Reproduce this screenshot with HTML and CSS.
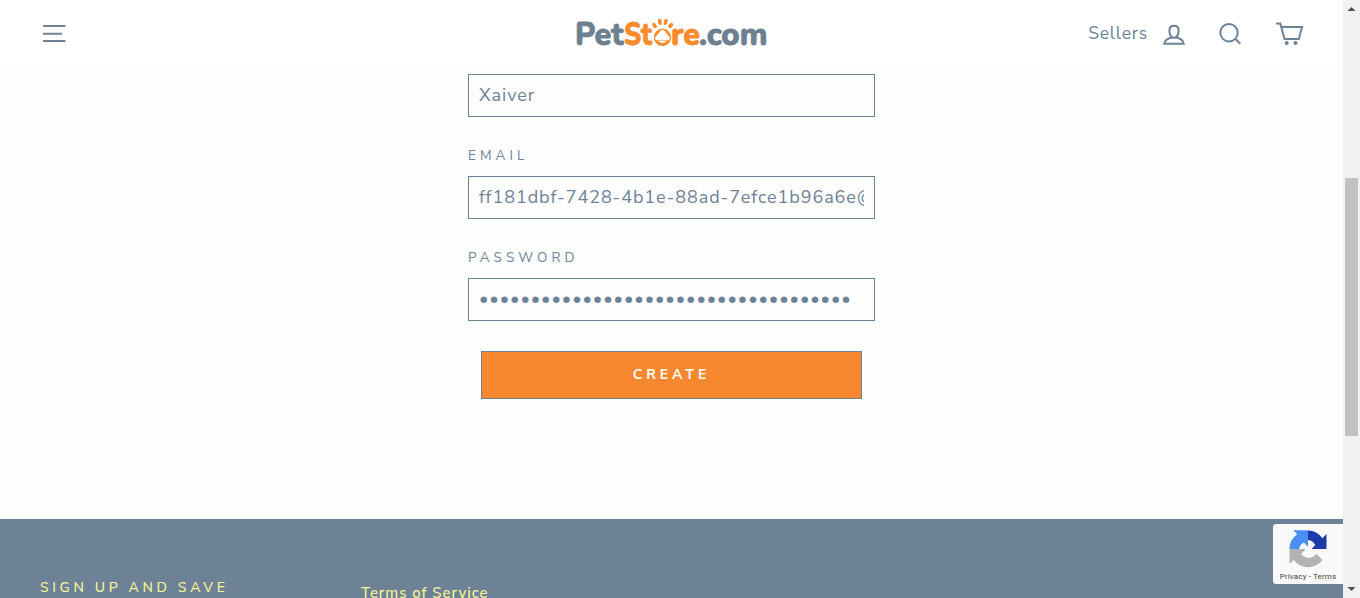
FILE: index.html
```html
<!DOCTYPE html>
<html lang="en">
<head>
<meta charset="utf-8">
<title>Create account</title>
<link rel="stylesheet" href="styles.css">
</head>
<body>
<div class="window">
  <div class="page">
    <header class="header">
      <svg class="menu" width="24" height="20" viewBox="0 0 24 20"><path d="M0 2h22.500M0 9.700h19M0 17h22.500"/></svg>
      <svg class="logo" width="196" height="42" viewBox="0 0 196 42">
        <g class="logo-text">
          <text x="-1" y="31" textLength="48.500" lengthAdjust="spacingAndGlyphs" class="slate">Pet</text>
          <text x="48" y="31" textLength="28" lengthAdjust="spacingAndGlyphs" class="orange">St</text>
          <text x="95" y="31" textLength="29" lengthAdjust="spacingAndGlyphs" class="orange">re</text>
          <text x="123" y="31" textLength="68.500" lengthAdjust="spacingAndGlyphs" class="slate">.com</text>
        </g>
        <circle cx="86.500" cy="23.300" r="7.200" class="ring"/>
        <path class="paw" d="M86.500 15.500c-2.600 0-3.200 3-5.200 5s-3.600 3.400-2 5.300 4.500.4 7.200.4 5.600 1.500 7.200-.4 0-3.300-2-5.300-2.600-5-5.200-5z"/>
        <g class="toes"><ellipse cx="78.500" cy="11.500" rx="1.900" ry="2.900" transform="rotate(-35 78.500 11.500)"/><ellipse cx="83.800" cy="7.800" rx="1.900" ry="3.200" transform="rotate(-8 83.800 7.800)"/><ellipse cx="89.700" cy="7.800" rx="1.900" ry="3.200" transform="rotate(12 89.700 7.800)"/><ellipse cx="94.700" cy="11.500" rx="1.900" ry="2.900" transform="rotate(38 94.700 11.500)"/></g>
      </svg>
      <nav class="tools">
        <span class="sellers">Sellers</span>
        <svg class="user" width="22" height="22" viewBox="0 0 22 22"><path d="M11 1.800c-3.200 0-4.600 1.800-4.600 4.700 0 2.800 1 5.500 2.600 6.600 1.200.8 2.800.8 4 0 1.600-1.100 2.600-3.800 2.600-6.600 0-2.900-1.400-4.700-4.600-4.700z"/><path d="M8.800 13.500c-3.800.8-6.900 2.200-7.500 6.300h19.400c-.6-4.100-3.700-5.500-7.500-6.300"/></svg>
        <svg class="search" width="24" height="24" viewBox="0 0 24 24"><circle cx="10" cy="9.700" r="8.700"/><path d="M16 15.500l5.300 5.200"/></svg>
        <svg class="cart" width="28" height="24" viewBox="0 0 28 24"><path d="M0 1.400h4.300l4.200 15.600h14.300L26 5H5.500"/><circle cx="10.700" cy="21" r="2"/><circle cx="19.500" cy="21" r="2"/></svg>
      </nav>
    </header>
    <main class="main">
      <form class="form">
        <input class="field" type="text" value="Xaiver" aria-label="Name">
        <label class="label" for="email">EMAIL</label>
        <input class="field" id="email" type="text" value="ff181dbf-7428-4b1e-88ad-7efce1b96a6e@">
        <label class="label" for="password">PASSWORD</label>
        <input class="field" id="password" type="password" value="123456789012345678901234567890123456">
        <button class="create" type="button">CREATE</button>
      </form>
    </main>
    <footer class="footer">
      <div class="signup">SIGN UP AND SAVE</div>
      <div class="terms">Terms of Service</div>
    </footer>
    <div class="badge">
      <svg width="40" height="40" viewBox="0 0 40 40">
        <path fill="#1c3aa9" d="M38.500 20V5l-4.200 4.200A18 18 0 0 0 20 1.500V11a9 9 0 0 1 7.200 5L23.500 20z"/>
        <path fill="#4a90f4" d="M20 1.300H5.200l4 4A18 18 0 0 0 1.500 20H11a9 9 0 0 1 4.800-6.500L20 17.800z"/>
        <path fill="#b3b3b3" d="M1.500 20v15l4.200-4.100A18 18 0 0 0 34.500 31l-6.200-6.300a9 9 0 0 1-15.200 0L17.800 20z"/>
      </svg>
      <span class="badge-text">Privacy - Terms</span>
    </div>
  </div>
  <div class="scrollbar">
    <svg width="17" height="17" viewBox="0 0 17 17"><path fill="#505050" d="M4.500 11l4-4 4 4z"/></svg>
    <div class="thumb"></div>
    <svg class="down" width="17" height="17" viewBox="0 0 17 17"><path fill="#505050" d="M4.500 6l4 4 4-4z"/></svg>
  </div>
</div>
</body>
</html>
```
FILE: styles.css
```css
* { box-sizing: border-box; }
body { margin: 0; overflow: hidden; font-family: "Nunito Sans", Nunito, Lato, sans-serif; color: #6d8297; }
.window { display: flex; width: 1360px; height: 598px; }
.page { position: relative; width: 1343px; height: 598px; overflow: hidden; background: #fdfdfd; }
.header { display: grid; grid-template-columns: 1fr 196px 1fr; height: 70px; padding: 0 39px 0 43px; background: #fff; }
.menu { margin-top: 24px; fill: none; stroke: #6d8297; stroke-width: 2; }
.logo { margin: 14px 0 0 0; overflow: visible; }
.logo-text { font: 800 32px Nunito, "Nunito Sans", Lato, sans-serif; stroke-width: .8; stroke-linejoin: round; }
.slate { fill: #6d8090; stroke: #6d8090; }
.orange, .toes { fill: #fa8b2c; }
.orange { stroke: #fa8b2c; }
.ring { fill: #fff; stroke: #fa8b2c; stroke-width: 3; }
.paw { fill: #fff; stroke: #fa8b2c; stroke-width: .8; }
.tools { display: flex; justify-content: flex-end; align-items: flex-start; }
.tools svg { fill: none; stroke: #6d8297; stroke-width: 2; }
.sellers { margin: 21px 15px 0 0; font-size: 17.5px; line-height: 24px; letter-spacing: .8px; }
.user { margin: 24px 34px 0 0; }
.search { margin: 23px 33px 0 0; }
.cart { margin-top: 22px; }
.cart circle { fill: #6d8297; stroke: none; }
.main { height: 449px; padding: 4px 0 0 468px; }
.form { display: flex; flex-direction: column; width: 407px; }
.field { width: 407px; height: 43px; margin: 0; padding: 0 10px 2px; border: 1px solid #6d8297; border-radius: 0; background: transparent; color: #6d8297; font: 18px "Nunito Sans", Nunito, Lato, sans-serif; letter-spacing: .92px; outline: none; }
.label { height: 59px; padding-top: 29px; font-size: 13.5px; line-height: 20px; letter-spacing: 4.1px; }
.create { width: 381px; height: 48px; margin: 30px 0 0 13px; padding: 0 0 2px; border: 1px solid #6d8297; background: #f8882f; color: #fff; font: 700 14px "Nunito Sans", Nunito, Lato, sans-serif; letter-spacing: 4px; }
.footer { display: grid; grid-template-columns: 321px 1fr; height: 79px; padding-left: 40px; background: #6d8297; color: #f8f694; overflow: hidden; }
.signup { padding-top: 59px; font-size: 14px; font-weight: 500; line-height: 20px; letter-spacing: 3.65px; }
.terms { padding-top: 64px; font-size: 15px; font-weight: 500; line-height: 20px; letter-spacing: .95px; white-space: nowrap; }
.badge { position: absolute; right: 0; top: 524px; display: flex; flex-direction: column; align-items: center; width: 70px; height: 60px; padding-top: 5px; border-radius: 3px 0 0 3px; background: #f9f9f9; }
.badge-text { font: 8px/11px Roboto, sans-serif; color: #444; margin-top: 2px; letter-spacing: .15px; white-space: nowrap; }
.scrollbar { display: flex; flex-direction: column; align-items: center; width: 17px; background: #f1f1f1; }
.scrollbar svg { flex: none; display: block; }
.thumb { width: 13px; height: 258px; margin-top: 161px; background: #c1c1c1; }
.down { margin-top: auto; }
```
